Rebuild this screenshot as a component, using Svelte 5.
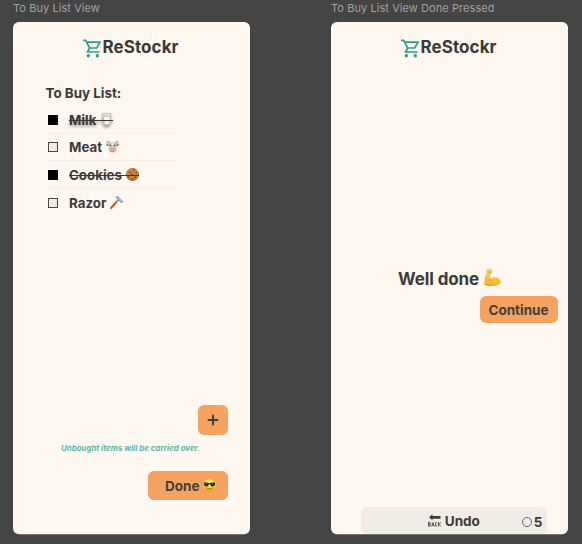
<script>
  const items = [
    { name: 'Milk', icon: 'milk', done: true, glow: true },
    { name: 'Meat', icon: 'cow', done: false },
    { name: 'Cookies', icon: 'cookie', done: true },
    { name: 'Razor', icon: 'razor', done: false }
  ];
</script>

{#snippet brand()}
  <header class="brand">
    <svg class="cart" viewBox="0 0 18 19" fill="none" stroke="#2a9d8f" stroke-width="1.7">
      <path d="M0 1.4h2.7l3.9 7.6h7.2l3-5.800H3.600M6.600 9l-2 4h12" />
      <circle cx="5.3" cy="16.700" r="1.700" fill="#2a9d8f" stroke="none" />
      <circle cx="14.3" cy="16.700" r="1.700" fill="#2a9d8f" stroke="none" />
    </svg>
    <h1>ReStockr</h1>
  </header>
{/snippet}

{#snippet emoji(kind)}
  <svg class="emoji" viewBox="0 0 26 26">
    {#if kind === 'milk'}
      <path d="M4 1h18l-3 22q-6 3-12 0z" fill="#d4d4d0" stroke="#b1b2ae" />
      <path d="M6 7q7 3 14 0l-2 14q-5 2-10 0z" fill="#f5f5ef" />
      <ellipse cx="13" cy="3" rx="9" ry="2.2" fill="#eeeeea" stroke="#aaaba7" />
      <path d="M7 9l1.5 12" stroke="#969792" stroke-width="1.5" />
    {:else if kind === 'cow'}
      <path d="M6 6Q0 6 2 1q2 3 6 2M20 6q6 0 4-5-2 3-6 2" fill="#a99378" />
      <path d="M6 8L0 7q0 5 6 6M20 8l6-1q0 5-6 6" fill="#8d827c" />
      <path d="M5 5q8-4 16 0v11q-2 9-8 9t-8-9z" fill="#e6e1da" />
      <path d="M5 6l5-2-1 7-4 3zM21 6l-5-2 1 7 4 3z" fill="#c4bcb4" />
      <ellipse cx="13" cy="19" rx="8" ry="6" fill="#e3b5a7" />
      <circle cx="9" cy="11" r="1.6" fill="#292a2c" /><circle cx="17" cy="11" r="1.6" fill="#292a2c" />
      <circle cx="10" cy="18" r="1" fill="#8a635b" /><circle cx="16" cy="18" r="1" fill="#8a635b" />
      <path d="M10 22q3 1.5 6 0" stroke="#9a625a" fill="none" />
    {:else if kind === 'cookie'}
      <circle cx="13" cy="13" r="13" fill="#a3642d" />
      <circle cx="13" cy="12" r="11.5" fill="#c98742" />
      <path d="M6 8l2-1 1 2-2 1zM14 3l3 1-2 2zM19 9l3 0-1 2zM10 13l3-1 1 2-3 1zM4 16l3 1-2 2zM17 17l2 0 0 3-2 0zM10 20l3 0 0 2z" fill="#67391d" stroke="#67391d" stroke-width=".6" />
      <path d="M9 4l2 1M16 10l2 1M13 18l3 0" stroke="#e8b66f" />
    {:else if kind === 'razor'}
      <path d="M2 24L12 13" stroke="#e2572c" stroke-width="4.3" stroke-linecap="round" />
      <path d="M10 15l8-9" stroke="#7a8387" stroke-width="3" />
      <path d="M5 20l4-4" stroke="#a93317" stroke-width="1.5" />
      <path d="M12 3l3-3 11 11-3 3z" fill="#9ba8af" stroke="#68747b" />
      <path d="M15 2l9 9" stroke="#e0e6e8" stroke-width="1.5" />
    {:else if kind === 'cool'}
      <defs>
        <radialGradient id="face" cx=".5" cy=".3" r=".7">
          <stop offset=".3" stop-color="#ffe557" /><stop offset="1" stop-color="#f19b16" />
        </radialGradient>
      </defs>
      <circle cx="13" cy="13" r="12.7" fill="url(#face)" />
      <path d="M1.5 7.5q7-1.5 10 .5h3q3-2 10-.5l-.7 2q0 5.500-4.800 5.500-4.200 0-5-5h-2q-.8 5-5 5-4.800 0-4.800-5.500z" fill="#252525" />
      <path d="M5 9.500h3M17 9.500h3" stroke="#a0a09a" stroke-width="1.2" />
      <path d="M8 18.500q5 4 10 0" stroke="#874312" stroke-width="1.7" fill="none" stroke-linecap="round" />
    {:else if kind === 'arm'}
      <defs>
        <linearGradient id="skin" x1="0" y1="0" x2="0" y2="1">
          <stop offset="0" stop-color="#ffd451" /><stop offset="1" stop-color="#f5b02a" />
        </linearGradient>
      </defs>
      <path d="M4 2q1-3 5-2 4-.5 4 3 0 4-4 4.500-.5 4 1 7.500 5-4 10-1.500 6 3 6 7-4 5-13 5.500Q4 26 .5 24 0 13 4 7z" fill="url(#skin)" />
      <path d="M5 4q2 2 4 0l1 3M9 15q0 3 3 3.500M1 23.500q5 2 10 1.500" fill="none" stroke="#d28819" />
    {:else}
      <path d="M2 6.500L9 .5v3.500h16v5.500H9v3z" fill="#3c3c3c" />
      <g fill="none" stroke="#484846" stroke-width="1.800">
        <path d="M1 16.500v8M1 16.500h3q3 2 0 4H1h3q3 2 0 4H1M7.500 25l2.500-8 2.500 8M8.500 22h3M18.500 17.500q-4-2-4 3.200t4 3.200M21 16.500v8.500M26 16.500l-4 4 4 4.500" />
      </g>
    {/if}
  </svg>
{/snippet}

<main class="board">
  <section class="frame">
    <p class="label">To Buy List View</p>
    <div class="screen">
      {@render brand()}
      <div class="list">
        <h2>To Buy List:</h2>
        <ul>
          {#each items as item}
            <li class:done={item.done} class:glow={item.glow}>
              <span class="box"></span>
              <span class="item"><span>{item.name}</span>{@render emoji(item.icon)}</span>
            </li>
          {/each}
        </ul>
      </div>
      <div class="actions">
        <button class="add" aria-label="Add"><svg viewBox="0 0 12 12"><path d="M6 .7v10.6M.7 6h10.6" stroke="#433e38" stroke-width="2.1" /></svg></button>
        <p class="note">Unbought items will be carried over.</p>
        <button class="finish"><span>Done</span>{@render emoji('cool')}</button>
      </div>
    </div>
  </section>

  <section class="frame">
    <p class="label">To Buy List View Done Pressed</p>
    <div class="screen">
      {@render brand()}
      <div class="praise"><span>Well done</span>{@render emoji('arm')}</div>
      <button class="continue">Continue</button>
      <div class="undo">
        <span class="back">{@render emoji('back')}<span>Undo</span></span>
        <span class="timer"><i></i>5</span>
      </div>
    </div>
  </section>
</main>

<style>
  :global(body) { margin: 0; background: #444; }
  .board {
    display: flex;
    gap: 81.5px;
    box-sizing: border-box;
    width: 582px;
    height: 544px;
    padding-left: 13px;
    overflow: hidden;
    background: #444;
    color: #3a3a39;
    font-family: Inter, "Liberation Sans", sans-serif;
    font-weight: 700;
  }
  .frame { width: 236.5px; flex: none; }
  p, h1, h2, ul { margin: 0; padding: 0; }
  .label { height: 22px; font-size: 11px; letter-spacing: .04px; line-height: 17px; font-weight: 400; color: #a1a1a1; white-space: nowrap; }
  .label { letter-spacing: .07px; }
  .screen {
    display: flex;
    flex-direction: column;
    box-sizing: border-box;
    height: 512px;
    border-radius: 6px;
    background: #fff8f0;
    box-shadow: 0 .5px 0 #aaa69f;
    overflow: hidden;
  }
  .brand { display: flex; height: 50px; padding: 17px 0 0 70px; box-sizing: border-box; flex: none; }
  .cart { width: 18px; height: 19px; margin-right: 1.5px; }
  h1 { font-size: 17px; line-height: 17px; font-weight: 700; letter-spacing: .08px; }
  .list { padding: 12px 0 0 32.5px; }
  h2 { height: 22px; font-size: 13.4px; line-height: 19px; font-weight: 700; letter-spacing: 0; white-space: nowrap; }
  ul { list-style: none; width: 130px; }
  li {
    display: flex;
    align-items: center;
    box-sizing: border-box;
    height: 27.7px;
    padding-left: 2px;
    border-bottom: 1px solid #f6f0e9;
    font-size: 13.3px;
    font-weight: 700;
    letter-spacing: .02px;
  }
  li:first-child .item { margin-top: 1px; }
  li:first-child .box { margin-top: 1px; }
  li:last-child { border: 0; height: 27px; }
  .box { box-sizing: border-box; width: 10px; height: 10px; margin-right: 11.5px; border: 1px solid #484845; background: #f1ede5; }
  .done .box { background: #000; border-color: #000; }
  .item { position: relative; display: flex; align-items: center; gap: 4px; line-height: 18px; }
  .item .emoji { margin-bottom: .5px; }
  .done .item::after { content: ''; position: absolute; left: 0; right: 0; top: 9px; height: 1px; background: #3a3a39; }
  .glow .item { filter: drop-shadow(0 2px 1.5px #0006); }
  .emoji { width: 13px; height: 13px; flex: none; overflow: visible; }
  button {
    display: flex;
    align-items: center;
    justify-content: center;
    padding: 0;
    border: 0;
    border-radius: 6px;
    background: #f4a261;
    color: #433e38;
    font: 700 13.5px Inter, "Liberation Sans", sans-serif;
    letter-spacing: 0;
  }
  .actions { display: flex; flex-direction: column; align-items: flex-end; margin-top: auto; padding: 0 21.5px 34px 0; }
  .add { width: 30.5px; height: 30.5px; }
  .add svg { width: 12px; height: 12px; }
  .note { margin: 8px 28px 17px 0; color: #5eb4a9; font-size: 7.8px; line-height: 11px; letter-spacing: .05px; font-style: italic; font-weight: 700; white-space: nowrap; }
  .finish { box-sizing: border-box; width: 80.5px; height: 29px; gap: 4px; padding-left: 6px; }
  .finish .emoji { margin-bottom: 1px; }
  .praise { display: flex; align-items: center; gap: 5px; margin: 196px 0 0 67px; height: 21px; font-size: 17px; font-weight: 700; letter-spacing: -.1px; white-space: nowrap; }
  .praise .emoji { width: 17px; height: 17px; margin-bottom: 2px; }
  .continue { align-self: flex-end; width: 78px; height: 27px; margin: 7px 10px 0 0; }
  .undo {
    display: flex;
    align-items: center;
    justify-content: flex-end;
    gap: 42px;
    box-sizing: border-box;
    width: 186px;
    height: 27px;
    margin: auto 0 0 30px;
    padding-right: 4.5px;
    border-radius: 6px;
    background: #f1ece5;
    font-size: 13.5px;
    font-weight: 700;
  }
  .back, .timer { display: flex; align-items: center; }
  .back { gap: 4px; }
  .back .emoji { margin-bottom: 1px; }
  .timer { gap: 2px; padding-top: 2px; }
  .timer i { box-sizing: border-box; width: 10px; height: 10px; border: 1px solid #686663; border-radius: 50%; }
</style>
